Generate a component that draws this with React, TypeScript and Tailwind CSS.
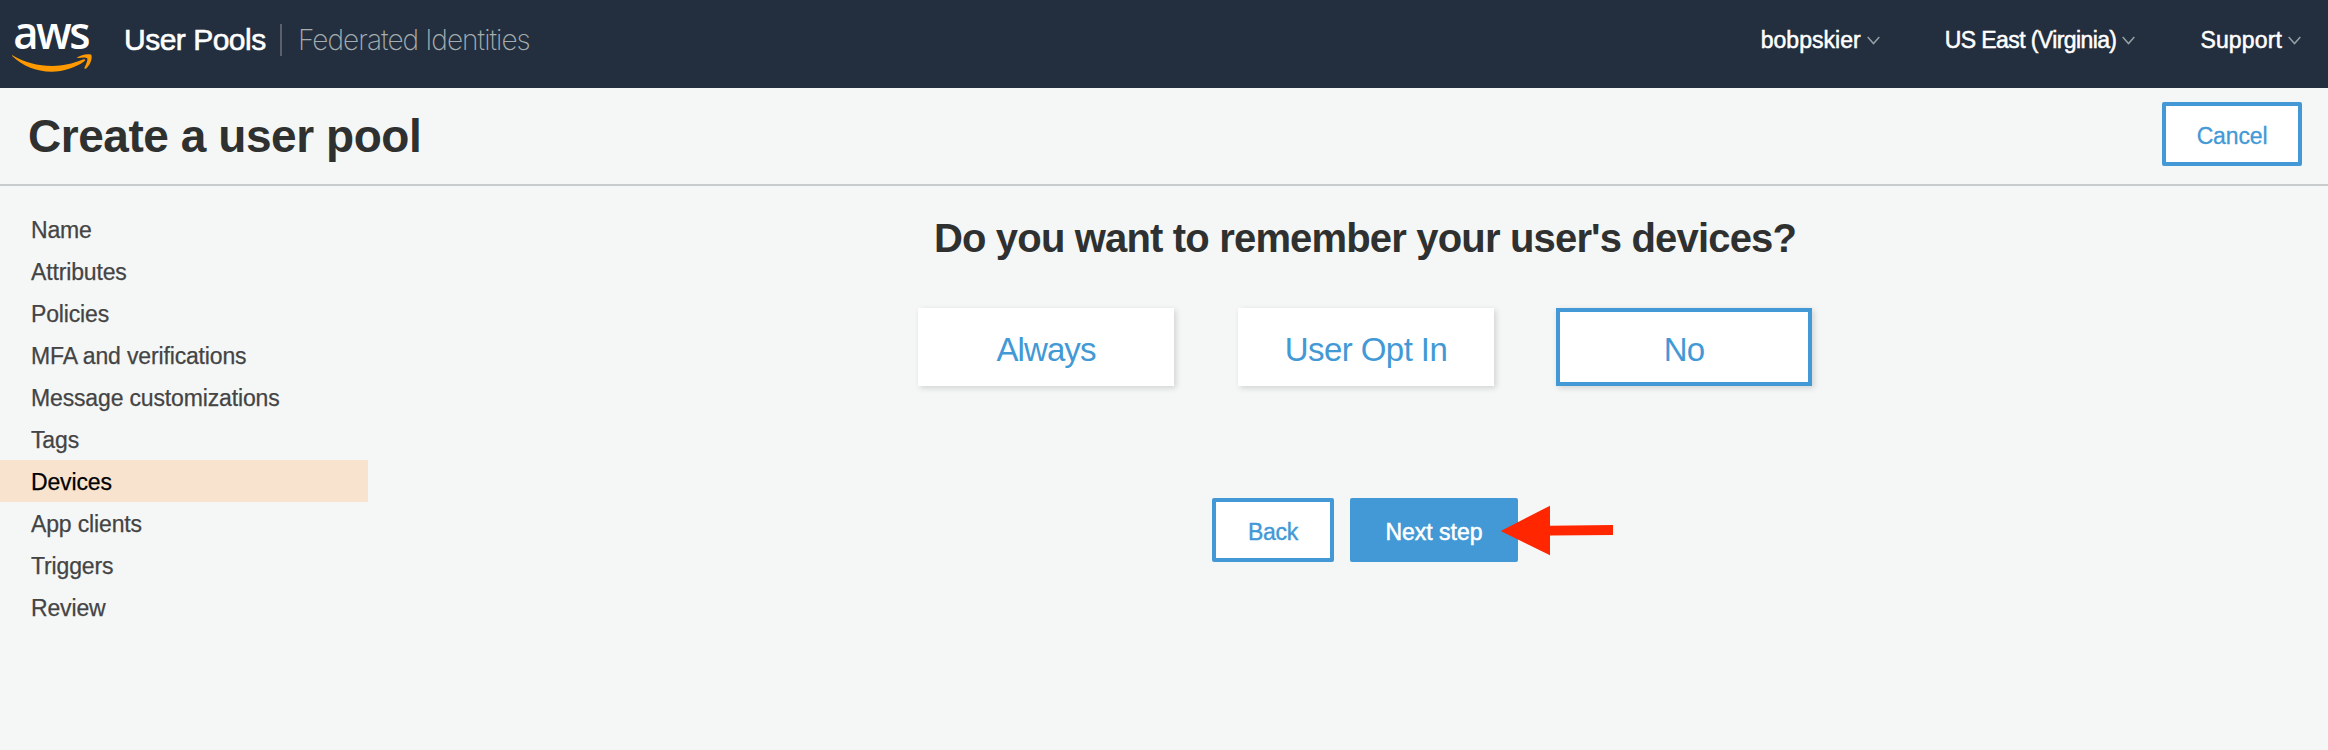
const steps = [
  "Name",
  "Attributes",
  "Policies",
  "MFA and verifications",
  "Message customizations",
  "Tags",
  "Devices",
  "App clients",
  "Triggers",
  "Review",
];

function AwsLogo() {
  return (
    <svg width="84" height="72" viewBox="0 -16 84 72" className="shrink-0" aria-label="aws">
      <text
        x="3.2"
        y="32.8"
        fill="#fff"
        fontFamily="'Open Sans', 'Noto Sans', sans-serif"
        fontWeight="600"
        fontSize="45"
        letterSpacing="-2.5"
        textLength="75"
        lengthAdjust="spacingAndGlyphs"
      >
        aws
      </text>
      <path
        d="M2.3 39.2 C1.7 38.9 1.9 39.8 2.4 40.3 C12 49.5 26 55.8 41.5 55.8 C53.5 55.8 66 51.5 74 45.6 C76 44.2 75.2 42.6 73 43.6 C62.5 48 52 50 42.5 50 C27.5 50 14.5 46.2 2.3 39.2 Z"
        fill="#ff9900"
      />
      <path
        d="M67.2 41.5 C70.5 39 76.5 37.6 80.8 38.6 C82.6 39.3 82 47.5 76.3 52.4 C75.2 53.3 74 52.8 74.6 51.5 C76 48.2 78.2 43.5 77.2 42.2 C76 40.9 71.5 41.4 68.2 42 C67.1 42.2 66.5 42 67.2 41.5 Z"
        fill="#ff9900"
      />
    </svg>
  );
}

function Chevron() {
  return (
    <svg width="13" height="9" viewBox="0 0 13 9" fill="none" stroke="#95a0a6" strokeWidth="1.5" className="mt-px">
      <path d="M0.7 1 L6.5 7.5 L12.3 1" />
    </svg>
  );
}

function MenuItem({ label, className }: { label: string; className: string }) {
  return (
    <button className="flex items-center gap-[6px] text-[23px] leading-8 text-white">
      <span className={`whitespace-nowrap [-webkit-text-stroke:0.5px_#fff] ${className}`}>{label}</span>
      <Chevron />
    </button>
  );
}

function Choice({ label, selected, className }: { label: string; selected?: boolean; className: string }) {
  return (
    <button
      className={`h-[78px] w-64 bg-white pt-[4px] text-[33px] leading-none text-[#4299d6] shadow-[2px_2px_6px_rgba(0,0,0,0.15)] ${
        selected ? "border-4 border-[#4299d6]" : "border-4 border-white"
      } ${className}`}
    >
      {label}
    </button>
  );
}

export default function App() {
  return (
    <div className="flex h-[750px] w-[2328px] flex-col overflow-hidden bg-[#f5f7f7] font-['Liberation_Sans',Arial,sans-serif]">
      <header className="flex h-[88px] shrink-0 items-start bg-[#232f3e] pl-[10px] pr-[27px]">
        <AwsLogo />
        <nav className="mt-6 flex h-8 items-center pl-[30px]">
          <span className="w-[156px] whitespace-nowrap text-[30px] leading-8 tracking-[-0.5px] text-white [-webkit-text-stroke:0.6px_#fff]">
            User Pools
          </span>
          <span className="h-8 w-[2px] bg-[#5a6167]" />
          <span className="whitespace-nowrap pl-4 font-['Inter',sans-serif] text-[28px] leading-8 font-extralight tracking-[-0.95px] text-[#a4adaf]">
            Federated Identities
          </span>
        </nav>
        <div className="mt-6 ml-auto flex">
          <MenuItem label="bobpskier" className="tracking-[0.05px]" />
          <div className="w-[65px]" />
          <MenuItem label="US East (Virginia)" className="tracking-[-0.6px]" />
          <div className="w-[65px]" />
          <MenuItem label="Support" className="tracking-[0.15px]" />
        </div>
      </header>

      <div className="flex h-[98px] shrink-0 items-start justify-between border-b-2 border-[#c9cccc] pr-[26px] pl-[28px]">
        <h1 className="pt-[22px] text-[46px] leading-[52px] font-bold tracking-[-0.45px] text-[#2f3130]">
          Create a user pool
        </h1>
        <button className="mt-[14px] h-16 w-[140px] rounded-[2px] border-4 border-[#4299d6] bg-white pt-1 text-[23px] leading-none tracking-[-0.15px] text-[#4299d6] [-webkit-text-stroke:0.3px_#4299d6]">
          Cancel
        </button>
      </div>

      <div className="flex flex-1">
        <ul className="w-[368px] shrink-0 pt-[22px]">
          {steps.map((step) => (
            <li
              key={step}
              className={`h-[42px] pt-[3px] pl-[31px] text-[23px] leading-[39px] tracking-[-0.15px] whitespace-nowrap [-webkit-text-stroke:0.25px_currentColor] ${
                step === "Devices" ? "bg-[#f8e4ce] text-black" : "text-[#444]"
              }`}
            >
              {step}
            </li>
          ))}
        </ul>

        <main className="flex flex-1 flex-col items-center pt-7 pl-[34px]">
          <h2 className="text-[40px] leading-[48px] font-bold tracking-[-0.83px] whitespace-nowrap text-[#2f3130]">
            Do you want to remember your user's devices?
          </h2>
          <div className="mt-[46px] flex">
            <Choice label="Always" className="mr-16 tracking-[-0.9px]" />
            <Choice label="User Opt In" className="mr-[62px] tracking-[-0.58px]" />
            <Choice label="No" selected className="tracking-[-0.8px]" />
          </div>
          <div className="mt-28 flex items-center">
            <button className="h-16 w-[122px] rounded-[2px] border-4 border-[#4299d6] bg-white pt-1 text-[23px] leading-none tracking-[-0.3px] text-[#4299d6] [-webkit-text-stroke:0.4px_#4299d6]">
              Back
            </button>
            <div className="relative ml-4">
              <button className="h-16 w-[168px] rounded-[2px] bg-[#4299d6] pt-1 text-[23px] leading-none text-white [-webkit-text-stroke:0.5px_#fff]">
                Next step
              </button>
              <svg width="114" height="52" viewBox="0 0 114 52" className="absolute top-[7px] left-[150px]">
                <path d="M0.7 26 L50 0.7 V20.7 L113 20 V30 L50 30.5 V50.3 Z" fill="#ff2600" />
              </svg>
            </div>
          </div>
        </main>
      </div>
    </div>
  );
}
